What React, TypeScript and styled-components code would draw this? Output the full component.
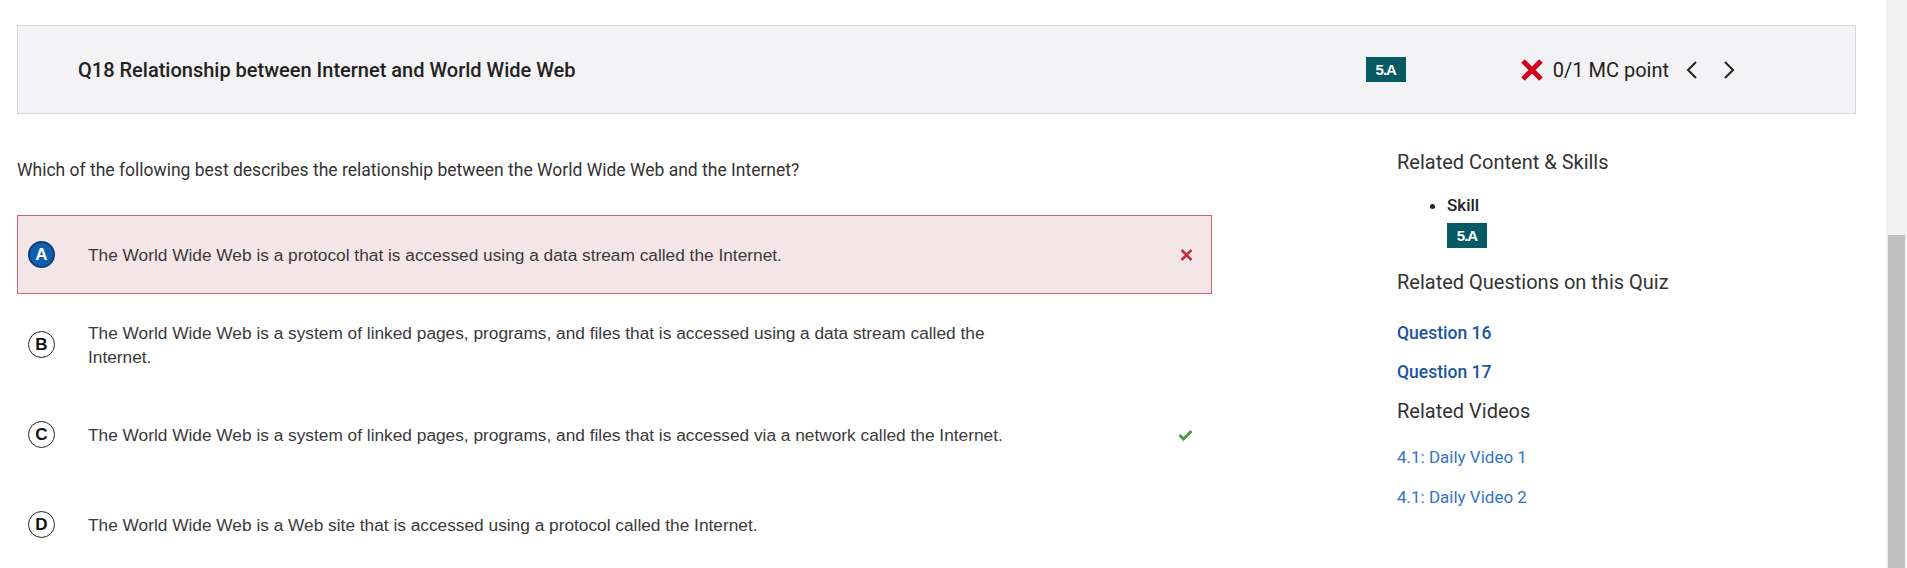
import React from "react";
import styled, { createGlobalStyle } from "styled-components";

const Global = createGlobalStyle`
  html, body { margin: 0; padding: 0; background: #fff; overflow: hidden; }
  body { font-family: Roboto, "Liberation Sans", Arial, sans-serif; color: #333; }
  * { box-sizing: border-box; }
`;

const Shell = styled.div`
  display: flex;
  height: 568px;
  overflow: hidden;
`;

const Page = styled.main`
  flex: 1;
  min-width: 0;
  padding: 25px 30px 0 17px;
`;

const ScrollTrack = styled.div`
  width: 21px;
  flex: none;
  background: #f1f1f1;
  display: flex;
  flex-direction: column;
  justify-content: flex-end;
  padding: 0 2px;
`;

const ScrollThumb = styled.div`
  height: 333px;
  background: #c1c1c1;
`;

const Header = styled.header`
  display: flex;
  align-items: center;
  height: 89px;
  border: 1px solid #d7d7d9;
  background: #f3f3f5;
  padding: 0 119px 0 60px;
`;

const Title = styled.h1`
  flex: 1;
  margin: 0;
  font-family: Roboto, sans-serif;
  font-size: 20px;
  font-weight: 500;
  color: #222;
`;

const Badge = styled.span<{ $mt?: number }>`
  display: inline-flex;
  align-items: center;
  justify-content: center;
  width: 40px;
  height: 25px;
  background: #075a63;
  color: #fff;
  font-family: "Liberation Sans", Arial, sans-serif;
  font-weight: 700;
  font-size: 15px;
  letter-spacing: -1px;
  margin-top: ${(p) => p.$mt ?? 0}px;
`;

const Score = styled.div`
  display: flex;
  align-items: center;
  margin-left: 114px;
`;

const ScoreText = styled.span`
  margin-left: 9px;
  font-size: 20px;
  color: #222;
`;

const NavButton = styled.button<{ $ml: number }>`
  display: flex;
  align-items: center;
  justify-content: center;
  border: 0;
  background: transparent;
  padding: 0;
  margin-left: ${(p) => p.$ml}px;
  width: 13px;
  height: 22px;
  cursor: pointer;
`;

const Body = styled.div`
  display: grid;
  grid-template-columns: 1195px 1fr;
  column-gap: 185px;
  margin-top: 36px;
`;

const Question = styled.p`
  margin: 8px 0 0;
  font-size: 17.5px;
  line-height: 24px;
  color: #333;
`;

const OptionList = styled.div`
  margin-top: 33px;
  display: flex;
  flex-direction: column;
  gap: 11px;
`;

const Option = styled.div<{ $wrong?: boolean }>`
  display: flex;
  align-items: center;
  min-height: 79px;
  padding: 0 18px 0 10px;
  border: 1px solid ${(p) => (p.$wrong ? "#cc6272" : "transparent")};
  background: ${(p) => (p.$wrong ? "#f4e6e8" : "transparent")};
`;

const Letter = styled.span<{ $selected?: boolean }>`
  flex: none;
  width: 27px;
  height: 27px;
  border-radius: 50%;
  display: flex;
  align-items: center;
  justify-content: center;
  font-family: "Liberation Sans", Arial, sans-serif;
  font-weight: 700;
  font-size: 17px;
  border: ${(p) => (p.$selected ? "2px solid #0c3f78" : "1.5px solid #222")};
  background: ${(p) => (p.$selected ? "#0f5fae" : "#fff")};
  color: ${(p) => (p.$selected ? "#fff" : "#111")};
`;

const OptionText = styled.span`
  margin-left: 33px;
  max-width: 940px;
  font-family: "Liberation Sans", Arial, sans-serif;
  font-size: 17.3px;
  line-height: 24px;
  color: #3a3a3a;
`;

const Mark = styled.span`
  margin-left: auto;
  display: flex;
  align-items: center;
`;

const Side = styled.aside`
  display: flex;
  flex-direction: column;
  align-items: flex-start;
`;

const SideHeading = styled.h2<{ $mt?: number }>`
  margin: ${(p) => p.$mt ?? 0}px 0 0;
  font-size: 20px;
  font-weight: 400;
  line-height: 24px;
  color: #333;
`;

const SkillList = styled.ul`
  margin: 20px 0 0;
  padding-left: 50px;
`;

const SkillItem = styled.li`
  font-size: 17px;
  font-weight: 500;
  line-height: 22px;
  color: #222;
`;

const SideLink = styled.a<{ $mt: number; $strong?: boolean }>`
  display: block;
  margin-top: ${(p) => p.$mt}px;
  font-size: ${(p) => (p.$strong ? 17.5 : 17)}px;
  line-height: 22px;
  font-weight: ${(p) => (p.$strong ? 500 : 400)};
  color: ${(p) => (p.$strong ? "#1b559b" : "#3474c2")};
  text-decoration: none;
`;

const BigX = () => (
  <svg width="24" height="24" viewBox="0 0 24 24">
    <path d="M3 3 L21 21 M21 3 L3 21" stroke="#d0021b" strokeWidth="5" />
  </svg>
);

const SmallX = () => (
  <svg width="13" height="12" viewBox="0 0 13 12">
    <path d="M1.5 1 L11.5 11 M11.5 1 L1.5 11" stroke="#c2303f" strokeWidth="2.6" />
  </svg>
);

const Check = () => (
  <svg width="15" height="12" viewBox="0 0 15 12">
    <path d="M1.5 6 L5.5 10 L13.5 2" stroke="#4a9b46" strokeWidth="3" fill="none" />
  </svg>
);

const Chevron = ({ dir }: { dir: "left" | "right" }) => (
  <svg width="13" height="22" viewBox="0 0 13 22">
    <path
      d={dir === "left" ? "M11 3 L3 11 L11 19" : "M2 3 L10 11 L2 19"}
      stroke="#222"
      strokeWidth="2"
      fill="none"
    />
  </svg>
);

const options = [
  { letter: "A", text: "The World Wide Web is a protocol that is accessed using a data stream called the Internet.", selected: true, mark: "wrong" },
  { letter: "B", text: "The World Wide Web is a system of linked pages, programs, and files that is accessed using a data stream called the Internet." },
  { letter: "C", text: "The World Wide Web is a system of linked pages, programs, and files that is accessed via a network called the Internet.", mark: "right" },
  { letter: "D", text: "The World Wide Web is a Web site that is accessed using a protocol called the Internet." },
];

export default function App() {
  return (
    <>
      <Global />
      <Shell>
        <Page>
          <Header>
            <Title>Q18 Relationship between Internet and World Wide Web</Title>
            <Badge>5.A</Badge>
            <Score>
              <BigX />
              <ScoreText>0/1 MC point</ScoreText>
              <NavButton $ml={16} aria-label="Previous">
                <Chevron dir="left" />
              </NavButton>
              <NavButton $ml={25} aria-label="Next">
                <Chevron dir="right" />
              </NavButton>
            </Score>
          </Header>
          <Body>
            <div>
              <Question>
                Which of the following best describes the relationship between the World Wide Web and the Internet?
              </Question>
              <OptionList>
                {options.map((o) => (
                  <Option key={o.letter} $wrong={o.mark === "wrong"}>
                    <Letter $selected={o.selected}>{o.letter}</Letter>
                    <OptionText>{o.text}</OptionText>
                    {o.mark && <Mark>{o.mark === "wrong" ? <SmallX /> : <Check />}</Mark>}
                  </Option>
                ))}
              </OptionList>
            </div>
            <Side>
              <SideHeading>Related Content &amp; Skills</SideHeading>
              <SkillList>
                <SkillItem>
                  Skill
                  <div>
                    <Badge $mt={7}>5.A</Badge>
                  </div>
                </SkillItem>
              </SkillList>
              <SideHeading $mt={22}>Related Questions on this Quiz</SideHeading>
              <SideLink href="#" $mt={28} $strong>Question 16</SideLink>
              <SideLink href="#" $mt={17} $strong>Question 17</SideLink>
              <SideHeading $mt={16}>Related Videos</SideHeading>
              <SideLink href="#" $mt={23}>4.1: Daily Video 1</SideLink>
              <SideLink href="#" $mt={18}>4.1: Daily Video 2</SideLink>
            </Side>
          </Body>
        </Page>
        <ScrollTrack>
          <ScrollThumb />
        </ScrollTrack>
      </Shell>
    </>
  );
}
